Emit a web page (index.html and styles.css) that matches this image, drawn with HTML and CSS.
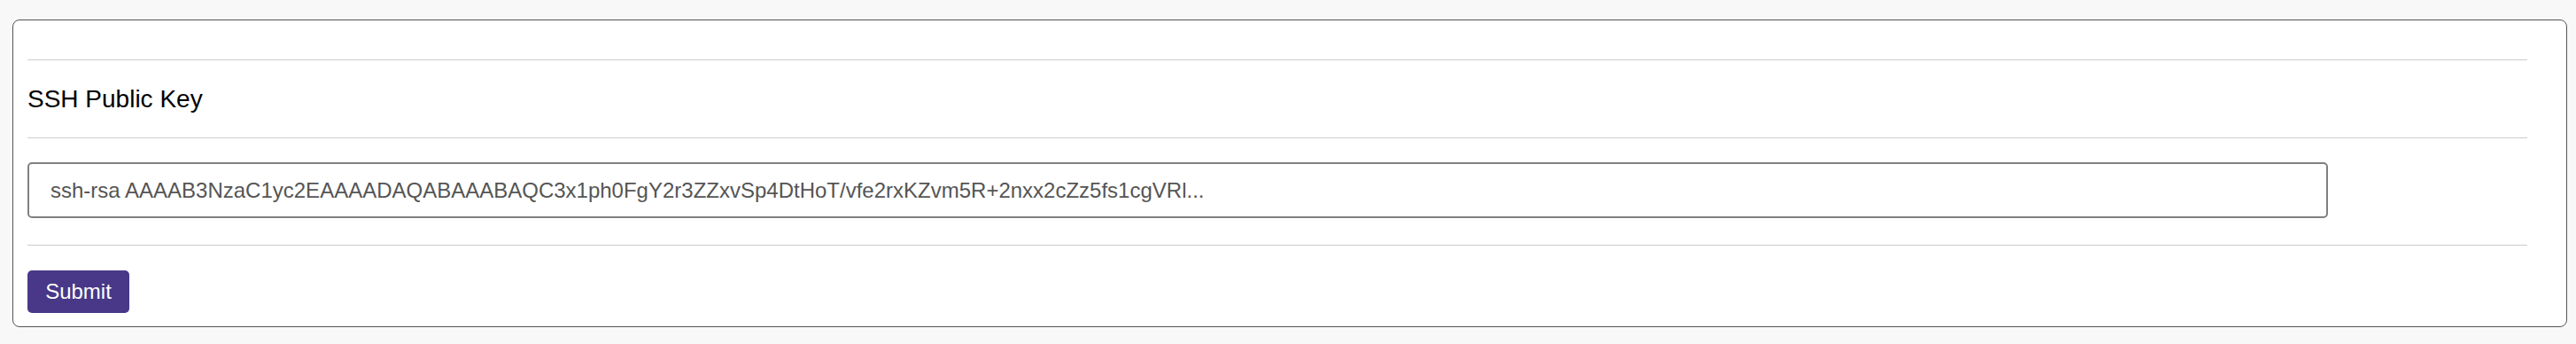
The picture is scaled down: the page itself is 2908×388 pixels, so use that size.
FILE: index.html
```html
<!DOCTYPE html>
<html lang="en">
<head>
    <meta charset="UTF-8">
    <title>SSH Public Key</title>
    <link rel="stylesheet" href="styles.css">
</head>
<body>
<div class="key-card">
    <div class="key-row key-title">SSH Public Key</div>
    <div class="key-row key-field">
        <input type="text" class="key-input" name="sshKey"
               value="ssh-rsa AAAAB3NzaC1yc2EAAAADAQABAAABAQC3x1ph0FgY2r3ZZxvSp4DtHoT/vfe2rxKZvm5R+2nxx2cZz5fs1cgVRl...">
    </div>
    <div class="key-row key-actions">
        <button class="key-submit">Submit</button>
    </div>
</div>
</body>
</html>
```

FILE: styles.css
```css
html, body {
    margin: 0;
    background-color: #f8f8f8;
    font-family: "Liberation Sans", Arial, sans-serif;
}

.key-card {
    margin: 22px 10px 0 14px;
    padding: 44px 44px 15px 16px;
    background-color: #fff;
    border: 1px solid #555;
    border-radius: 8px;
}

.key-row {
    border-top: 1px solid #ccc;
}

.key-title {
    height: 87px;
    display: flex;
    align-items: center;
    font-size: 28px;
    color: #000;
}

.key-field {
    padding: 27px 0 30px 0;
}

.key-input {
    box-sizing: border-box;
    display: block;
    width: 2597px;
    height: 63px;
    padding: 0 24px;
    border: 2px solid #808080;
    border-radius: 5px;
    font-family: "Liberation Sans", Arial, sans-serif;
    font-size: 24px;
    color: #555;
    background-color: #fff;
}

.key-actions {
    padding-top: 28px;
}

.key-submit {
    display: block;
    width: 115px;
    height: 48px;
    border: none;
    border-radius: 5px;
    background-color: #483887;
    color: #fff;
    font-family: "Liberation Sans", Arial, sans-serif;
    font-size: 24px;
}
```
